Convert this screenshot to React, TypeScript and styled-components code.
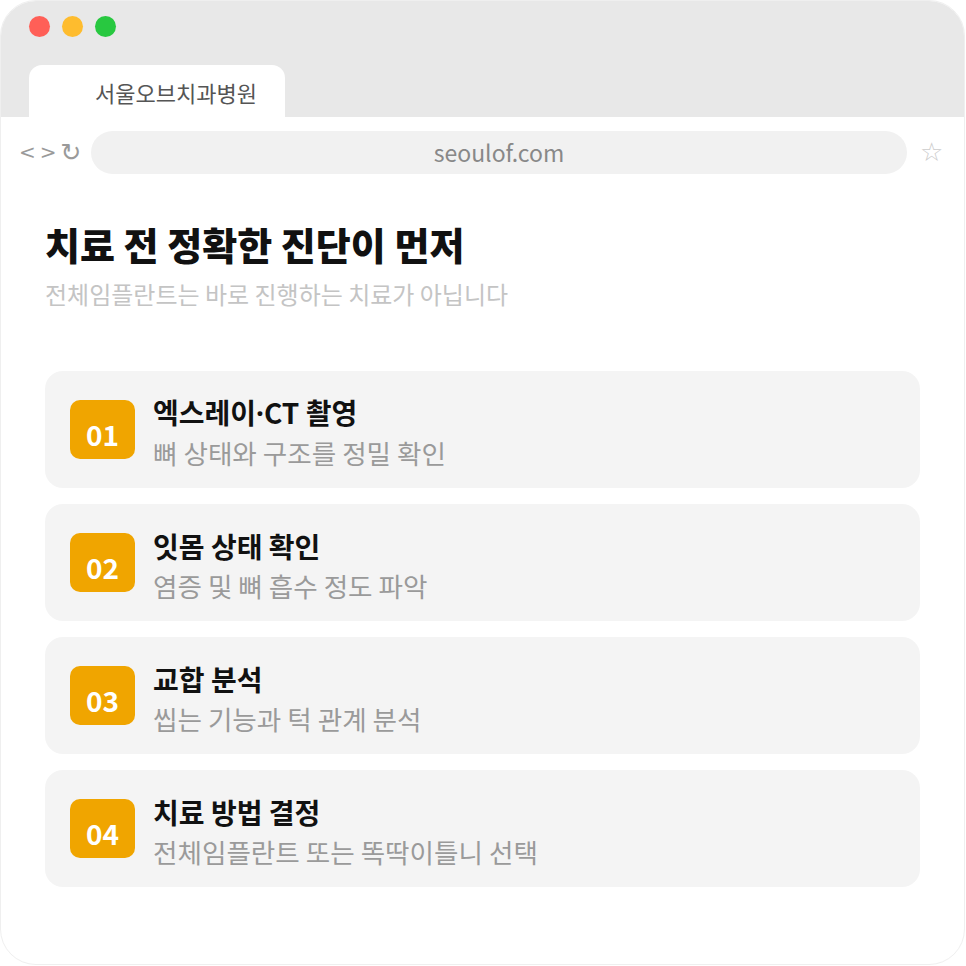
import React from "react";
import styled, { createGlobalStyle } from "styled-components";

const Global = createGlobalStyle`
  html, body { margin: 0; padding: 0; background: #ffffff; }
  body { font-family: "Noto Sans CJK KR", "Noto Sans", sans-serif; }
`;

const Window = styled.div`
  width: 965px;
  height: 965px;
  box-sizing: border-box;
  border: 1px solid #efefef;
  border-radius: 36px;
  overflow: hidden;
  background: #ffffff;
  display: flex;
  flex-direction: column;
`;

const TitleBar = styled.div`
  background: #e8e8e8;
  height: 116px;
  display: flex;
  flex-direction: column;
  justify-content: space-between;
`;

const Lights = styled.div`
  display: flex;
  gap: 12px;
  padding: 15px 0 0 28px;
`;

const Light = styled.span<{ $c: string }>`
  width: 21px;
  height: 21px;
  border-radius: 50%;
  background: ${(p) => p.$c};
`;

const Tab = styled.div`
  margin-left: 28px;
  width: 256px;
  height: 52px;
  background: #ffffff;
  border-radius: 13px 13px 0 0;
  box-sizing: border-box;
  padding: 2px 0 0 66px;
  display: flex;
  align-items: center;
  font-size: 22px;
  color: #555555;
`;

const AddressRow = styled.div`
  display: flex;
  align-items: center;
  height: 70px;
  padding: 0 0 0 18px;
  box-sizing: border-box;
`;

const Nav = styled.div`
  display: flex;
  align-items: center;
  gap: 4px;
  width: 72px;
  color: #9a9a9a;
  font-family: "DejaVu Sans", sans-serif;
`;

const NavGlyph = styled.span<{ $size: number }>`
  font-size: ${(p) => p.$size}px;
  line-height: 1;
`;

const UrlBar = styled.div`
  width: 816px;
  height: 43px;
  border-radius: 22px;
  background: #f1f1f1;
  display: flex;
  align-items: center;
  justify-content: center;
  font-size: 23px;
  color: #888888;
`;

const Star = styled.div`
  margin-left: 13px;
  font-family: "DejaVu Sans", sans-serif;
  color: #cccccc;
  font-size: 26px;
  line-height: 1;
`;

const Content = styled.div`
  padding: 32px 44px 0 44px;
  display: flex;
  flex-direction: column;
`;

const Heading = styled.h1`
  margin: 0;
  font-size: 38px;
  font-weight: 900;
  color: #111111;
  line-height: 49px;
`;

const Sub = styled.p`
  margin: 9px 0 0 0;
  font-size: 24px;
  color: #c4c4c4;
  line-height: 34px;
`;

const List = styled.div`
  margin-top: 60px;
  display: flex;
  flex-direction: column;
  gap: 16px;
`;

const Card = styled.div`
  height: 117px;
  border-radius: 18px;
  background: #f4f4f4;
  display: flex;
  align-items: center;
  padding-left: 25px;
  gap: 18px;
  box-sizing: border-box;
  width: 875px;
`;

const Badge = styled.div`
  width: 65px;
  height: 59px;
  border-radius: 10px;
  background: #f0a500;
  color: #ffffff;
  font-weight: 700;
  font-size: 28px;
  display: flex;
  align-items: center;
  justify-content: center;
  padding-top: 9px;
  box-sizing: border-box;
  flex-shrink: 0;
`;

const Texts = styled.div`
  display: flex;
  flex-direction: column;
  padding-top: 6px;
`;

const ItemTitle = styled.div`
  font-size: 28px;
  font-weight: 700;
  color: #111111;
  line-height: 40px;
`;

const Dot = styled.span`
  font-family: "Noto Sans", sans-serif;
`;

const ItemDesc = styled.div`
  font-size: 26.6px;
  color: #9a9a9a;
  line-height: 40px;
`;

const steps: { n: string; t: React.ReactNode; d: string }[] = [
  {
    n: "01",
    t: (
      <>
        엑스레이<Dot>·</Dot>CT 촬영
      </>
    ),
    d: "뼈 상태와 구조를 정밀 확인",
  },
  { n: "02", t: "잇몸 상태 확인", d: "염증 및 뼈 흡수 정도 파악" },
  { n: "03", t: "교합 분석", d: "씹는 기능과 턱 관계 분석" },
  { n: "04", t: "치료 방법 결정", d: "전체임플란트 또는 똑딱이틀니 선택" },
];

export default function App() {
  return (
    <>
      <Global />
      <Window>
        <TitleBar>
          <Lights>
            <Light $c="#ff5f57" />
            <Light $c="#febc2e" />
            <Light $c="#28c840" />
          </Lights>
          <Tab>서울오브치과병원</Tab>
        </TitleBar>
        <AddressRow>
          <Nav>
            <NavGlyph $size={20}>&lt;</NavGlyph>
            <NavGlyph $size={20}>&gt;</NavGlyph>
            <NavGlyph $size={25}>↻</NavGlyph>
          </Nav>
          <UrlBar>seoulof.com</UrlBar>
          <Star>☆</Star>
        </AddressRow>
        <Content>
          <Heading>치료 전 정확한 진단이 먼저</Heading>
          <Sub>전체임플란트는 바로 진행하는 치료가 아닙니다</Sub>
          <List>
            {steps.map((s) => (
              <Card key={s.n}>
                <Badge>{s.n}</Badge>
                <Texts>
                  <ItemTitle>{s.t}</ItemTitle>
                  <ItemDesc>{s.d}</ItemDesc>
                </Texts>
              </Card>
            ))}
          </List>
        </Content>
      </Window>
    </>
  );
}
